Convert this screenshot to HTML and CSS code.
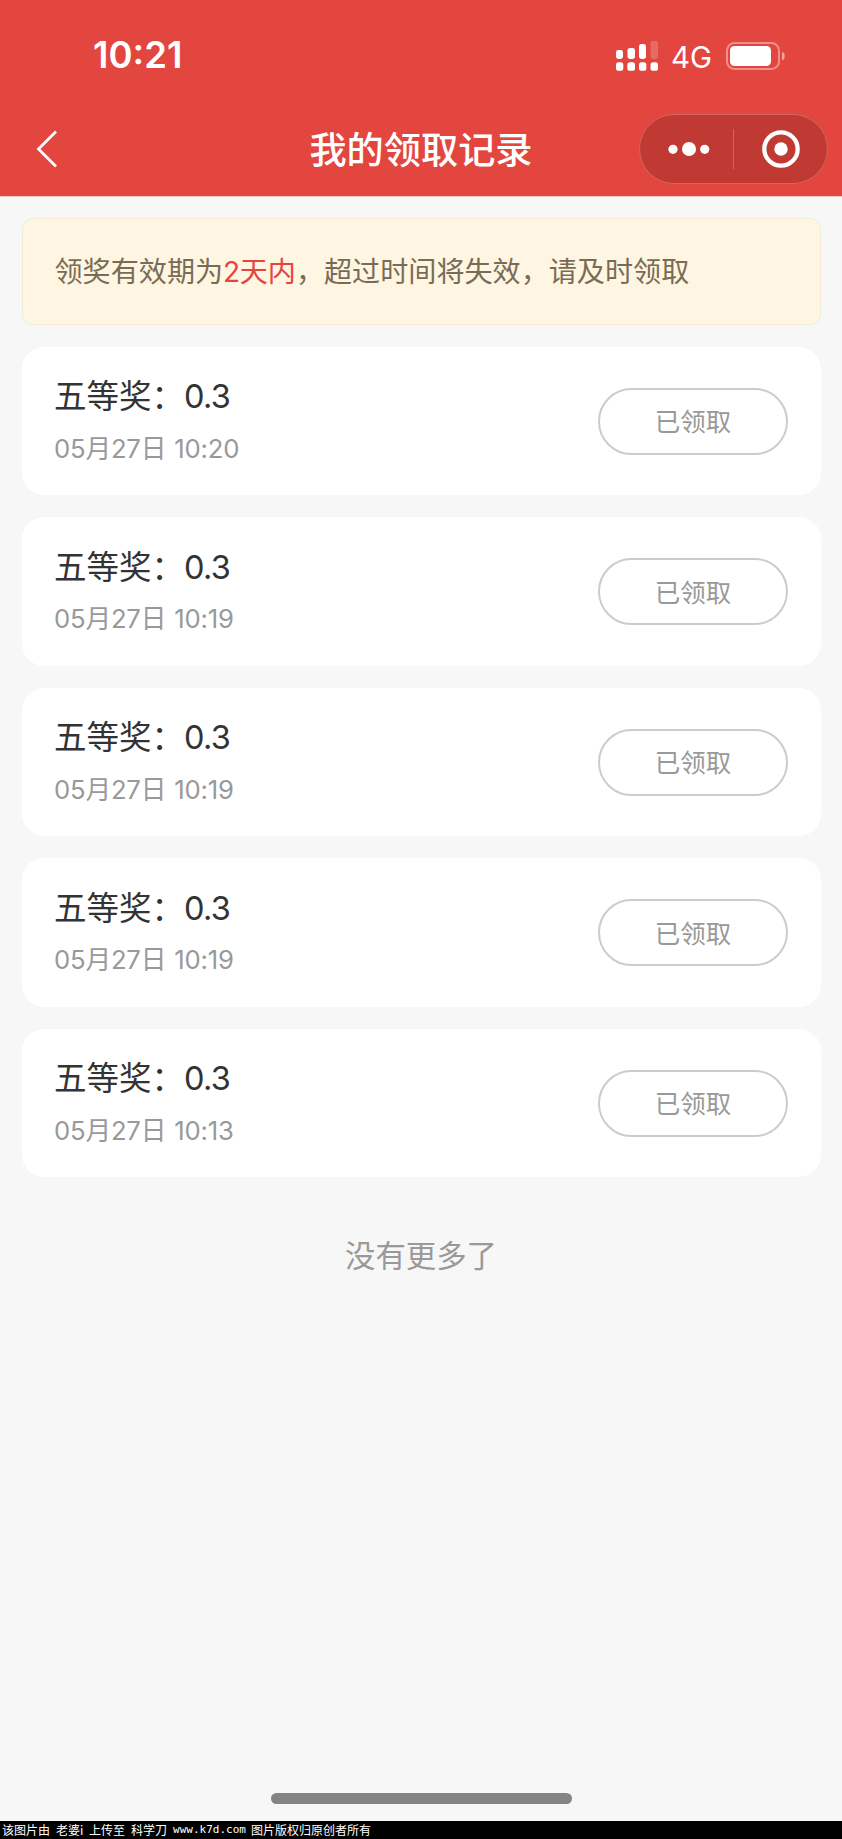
FILE: index.html
```html
<!DOCTYPE html>
<html lang="zh-CN">
<head>
<meta charset="utf-8">
<title>我的领取记录</title>
<link rel="stylesheet" href="styles.css">
</head>
<body>
<div class="page">
  <header class="header">
    <div class="status">
      <span class="clock">10:21</span>
      <div class="status-icons">
        <svg class="signal" width="42" height="30" viewBox="0 0 42 30" fill="#fff">
          <rect x="0" y="9" width="7" height="9" rx="2.4"/>
          <rect x="11.5" y="7" width="7.5" height="11" rx="2.4"/>
          <rect x="23" y="3" width="7" height="15" rx="2.4"/>
          <rect x="34.5" y="0" width="7.5" height="18" rx="2.4" opacity=".2"/>
          <rect x="0" y="21.3" width="7.3" height="8.5" rx="2.6"/>
          <rect x="11.3" y="21.3" width="7.7" height="8.5" rx="2.6"/>
          <rect x="23" y="21.3" width="7.3" height="8.5" rx="2.6"/>
          <rect x="34.5" y="21.3" width="7.5" height="8.5" rx="2.6"/>
        </svg>
        <span class="network">4G</span>
        <svg class="battery" width="60" height="28" viewBox="0 0 60 28">
          <rect x="1" y="1" width="52" height="26" rx="7.5" fill="none" stroke="#fff" stroke-opacity=".4" stroke-width="2"/>
          <rect x="4" y="4" width="41" height="20" rx="4.5" fill="#fff"/>
          <path d="M56 9.5a5 5 0 0 1 0 9z" fill="#fff" fill-opacity=".5"/>
        </svg>
      </div>
    </div>
    <nav class="nav">
      <svg class="back" width="21" height="38" viewBox="0 0 21 38" fill="none" stroke="#fff" stroke-width="2.8"><path d="M20 1.500 2.500 19 20 36.500"/></svg>
      <h1 class="title">我的领取记录</h1>
      <div class="capsule">
        <svg class="dots" width="42" height="14" viewBox="0 0 42 14" fill="#fff"><circle cx="5" cy="7.300" r="4.600"/><circle cx="21" cy="7" r="7"/><circle cx="36.700" cy="7.300" r="4.600"/></svg>
        <span class="divider"></span>
        <svg class="target" width="38" height="38" viewBox="0 0 38 38"><circle cx="19" cy="19" r="16.700" fill="none" stroke="#fff" stroke-width="4.300"/><circle cx="19" cy="19" r="6.700" fill="#fff"/></svg>
      </div>
    </nav>
  </header>
  <main class="content">
    <p class="notice">领奖有效期为<em class="accent"><span class="num">2</span>天内</em>，超过时间将失效，请及时领取</p>
    <section class="card"><div><h2 class="prize">五等奖：<span class="amount">0.3</span></h2><p class="date">05月27日 <span class="time">10:20</span></p></div><button class="claimed">已领取</button></section>
    <section class="card"><div><h2 class="prize">五等奖：<span class="amount">0.3</span></h2><p class="date">05月27日 <span class="time">10:19</span></p></div><button class="claimed">已领取</button></section>
    <section class="card"><div><h2 class="prize">五等奖：<span class="amount">0.3</span></h2><p class="date">05月27日 <span class="time">10:19</span></p></div><button class="claimed">已领取</button></section>
    <section class="card"><div><h2 class="prize">五等奖：<span class="amount">0.3</span></h2><p class="date">05月27日 <span class="time">10:19</span></p></div><button class="claimed">已领取</button></section>
    <section class="card"><div><h2 class="prize">五等奖：<span class="amount">0.3</span></h2><p class="date">05月27日 <span class="time">10:13</span></p></div><button class="claimed">已领取</button></section>
    <p class="end">没有更多了</p>
  </main>
  <div class="home-bar"></div>
  <footer class="credit"><span class="source">该图片由</span><span class="user">老婆i</span><span class="word">上传至</span><span class="word">科学刀</span><span class="site">www.k7d.com</span><span class="word">图片版权归原创者所有</span></footer>
</div>
</body>
</html>
```
FILE: styles.css
```css
* { box-sizing: border-box; margin: 0; padding: 0; }
body { font-family: Inter, "Noto Sans CJK SC", sans-serif; background: #f7f7f7; }
.page { height: 1839px; display: flex; flex-direction: column; overflow: hidden; }
.header { height: 197px; background: #e2463f; border-bottom: 1px solid #f5c9c7; color: #fff; flex: none; }
.status { height: 112px; padding: 0 56px 0 93px; display: flex; justify-content: space-between; }
.clock { font-size: 36.500px; font-weight: 600; line-height: 45px; margin-top: 33px; letter-spacing: 0; }
.status-icons { display: flex; align-items: flex-start; }
.signal { margin-top: 41px; }
.network { font-size: 29.500px; line-height: 36px; margin: 39px 0 0 13px; width: 55px; letter-spacing: 0; }
.battery { margin-top: 42px; }
.nav { height: 84px; display: grid; grid-template-columns: 1fr auto 1fr; padding: 0 14px 0 36px; align-items: start; }
.back { margin-top: 18px; }
.title { font-size: 37.200px; line-height: 54px; font-weight: 500; margin: 12px 0 0 -22px; }
.capsule { justify-self: end; width: 189px; height: 70px; margin-top: 2px; border: 1px solid #cf6661; border-radius: 35px; background: #c03a33; display: flex; align-items: center; padding-left: 28px; }
.divider { width: 1px; height: 40px; background: #cf6560; margin: 0 28px 0 23px; }
.content { padding: 21px 21.500px 0; flex: 1; }
.notice { height: 107px; border: 1px solid #f4ecd8; border-radius: 11px; background: #fef6e3; color: #7a6c54; font-size: 28.100px; line-height: 40px; padding: 33px 32px 0; white-space: nowrap; }
.accent { font-style: normal; color: #e8433c; }
.num { letter-spacing: -.5px; }
.card { height: 148.700px; margin-top: 21.800px; background: #fff; border-radius: 22px; display: flex; justify-content: space-between; align-items: flex-start; padding: 0 32.500px; }
.prize { font-size: 32.500px; line-height: 46px; font-weight: 400; color: #333; margin-top: 27.500px; white-space: nowrap; }
.amount { letter-spacing: -.7px; }
.date { font-size: 25.700px; line-height: 36px; color: #999; margin-top: 10.500px; letter-spacing: -.2px; }
.time { margin-left: 1px; }
.claimed { width: 190px; height: 67px; margin-top: 41px; padding-bottom: 3px; border: 2px solid #ccc; border-radius: 34px; background: transparent; color: #999; font: 25.500px "Noto Sans CJK SC", sans-serif; }
.end { font-size: 30.400px; line-height: 44px; text-align: center; color: #999; margin-top: 57px; }
.home-bar { width: 301px; height: 11px; border-radius: 6px; background: #848484; margin: 0 auto 17px; flex: none; }
.credit { height: 18px; flex: none; background: #000; color: #fff; font: 12px/18px "Noto Sans CJK SC", sans-serif; padding-left: 2px; display: flex; gap: 6px; white-space: nowrap; }
.user { width: 27px; }
.site { font-family: "DejaVu Sans Mono", monospace; font-size: 11px; width: 72px; }
```
